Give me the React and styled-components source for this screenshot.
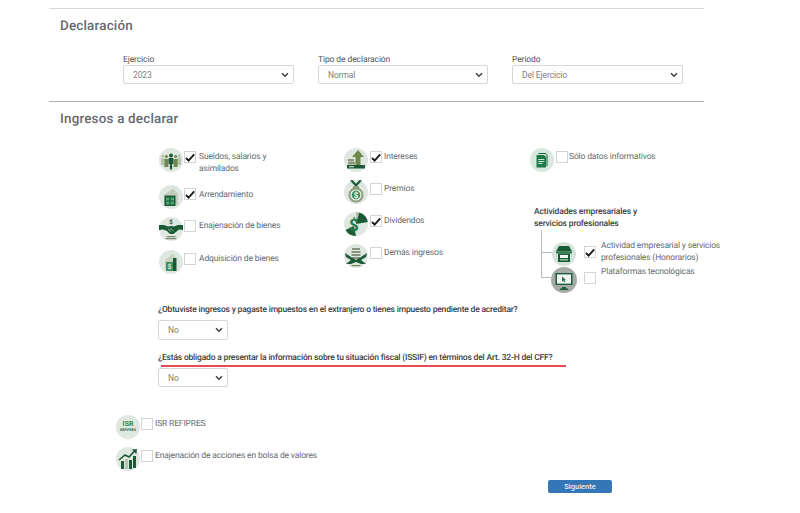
import React from "react";
import styled, { createGlobalStyle } from "styled-components";

const GlobalStyle = createGlobalStyle`
  html, body {
    margin: 0;
    padding: 0;
    background: #fff;
    font-family: Roboto, "Liberation Sans", sans-serif;
    text-rendering: geometricPrecision;
  }
`;

const DARK = "#1b5a36";
const MID = "#3f8f5c";
const OLIVE = "#6d8a4c";
const PALE = "#b9c2ae";
const DISC = "#dfe7e1";

const Page = styled.div`
  width: 655px;
  height: 505px;
  margin-left: 49px;
  padding-top: 8px;
  position: relative;
`;

const Rule = styled.hr`
  margin: 0;
  border: 0;
  height: 1px;
  background: ${(p) => p.$color};
`;

const Heading = styled.h2`
  margin: 0;
  padding: ${(p) => p.$pad};
  font-size: 13.4px;
  line-height: 18px;
  font-weight: 500;
  letter-spacing: 0.2px;
  color: #636a70;
`;

const SelectRow = styled.div`
  display: flex;
  gap: 24px;
  padding: 19px 0 17px 74px;
`;

const Field = styled.div`
  display: flex;
  flex-direction: column;
  width: ${(p) => p.$w}px;
`;

const FieldLabel = styled.label`
  font-size: 8.5px;
  line-height: 10px;
  letter-spacing: -0.1px;
  color: #555;
`;

const SelectBox = styled.div`
  position: relative;
  width: ${(p) => p.$w || "100%"};
  height: ${(p) => p.$h || 19}px;
`;

const NativeSelect = styled.select`
  appearance: none;
  width: 100%;
  height: 100%;
  display: block;
  box-sizing: border-box;
  padding: 0 0 0 9px;
  border: 1px solid #d5d8da;
  border-radius: 2px;
  background: #fff;
  font-family: inherit;
  font-size: 8.5px;
  letter-spacing: -0.1px;
  color: #7b7f82;
`;

const Chevron = styled.svg`
  position: absolute;
  right: 5px;
  top: 50%;
  width: 8px;
  height: 6px;
  margin-top: -3px;
  pointer-events: none;
`;

const Income = styled.div`
  display: grid;
  grid-template-columns: 185px 186px 180px;
  padding: 19px 0 0 110px;
  height: 146px;
`;

const Column = styled.div`
  display: flex;
  flex-direction: column;
`;

const Option = styled.div`
  display: flex;
  align-items: flex-start;
  margin-top: ${(p) => p.$mt || 0}px;
  margin-left: ${(p) => p.$ml || 0}px;
`;

const Disc = styled.svg`
  flex: none;
  width: ${(p) => p.$size || 24}px;
  height: ${(p) => p.$size || 24}px;
  display: block;
`;

const Box = styled.span`
  flex: none;
  box-sizing: border-box;
  width: 12px;
  height: 12px;
  margin: ${(p) => p.$mt ?? 3}px ${(p) => p.$mr ?? 3}px 0 ${(p) => p.$ml ?? 1}px;
  border: 1px solid #d2d4d6;
  background: #fff;
  display: flex;
  align-items: center;
  justify-content: center;
`;

const OptionText = styled.span`
  flex: none;
  font-size: 8.5px;
  line-height: 12px;
  letter-spacing: -0.15px;
  color: #666b6f;
  margin-top: ${(p) => p.$mt ?? 3}px;
  width: ${(p) => p.$w || "auto"};
  white-space: ${(p) => (p.$wrap ? "normal" : "nowrap")};
`;

const GroupTitle = styled.div`
  margin: 34px 0 0 4px;
  width: 130px;
  font-size: 8.5px;
  line-height: 12px;
  font-weight: 500;
  letter-spacing: -0.15px;
  color: #3a3d40;
`;

const Tree = styled.div`
  position: relative;
  margin: 12px 0 0 22px;
  height: 50px;
`;

const TreeLine = styled.span`
  position: absolute;
  left: -11px;
  top: -12px;
  width: 11px;
  height: 47px;
  border-left: 1px solid #b8bcbc;
  border-bottom: 1px solid #b8bcbc;
`;

const TreeBranch = styled.span`
  position: absolute;
  left: -11px;
  top: 10px;
  width: 11px;
  height: 1px;
  background: #b8bcbc;
`;

const Questions = styled.div`
  padding: 10px 0 0 109px;
`;

const Question = styled.p`
  position: relative;
  margin: ${(p) => p.$mt || 0}px 0 4px;
  font-size: 8.5px;
  line-height: 12px;
  font-weight: 500;
  letter-spacing: -0.19px;
  color: #3b3e41;
`;

const RedLine = styled.span`
  position: absolute;
  left: 3px;
  top: 13px;
  width: 405px;
  height: 2px;
  background: #e64a54;
`;

const Extras = styled.div`
  padding: 28px 0 0 67px;
  display: flex;
  flex-direction: column;
  gap: 8px;
`;

const IsrDisc = styled.div`
  flex: none;
  width: 24px;
  height: 24px;
  border-radius: 50%;
  background: ${DISC};
  display: flex;
  flex-direction: column;
  align-items: center;
  justify-content: center;
  color: #2c8a4e;
  font-weight: 700;
`;

const IsrTop = styled.span`
  font-size: 7px;
  line-height: 7px;
`;

const IsrBottom = styled.span`
  font-size: 3.5px;
  line-height: 5px;
  color: ${DARK};
`;

const Footer = styled.div`
  display: flex;
  padding: 9px 0 0 499px;
`;

const NextButton = styled.button`
  width: 64px;
  height: 13px;
  padding: 0;
  border: 0;
  border-radius: 2px;
  background: #3577b6;
  color: #e8f0f8;
  font-family: inherit;
  font-size: 7.5px;
  font-weight: 500;
  line-height: 13px;
`;

const Check = () => (
  <svg width="10" height="9" viewBox="0 0 10 9">
    <path d="M1 5 L3.6 7.6 L9.2 1.4" fill="none" stroke="#1c1c1c" strokeWidth="1.9" />
  </svg>
);

const CheckBox = ({ on, ml, mr, mt }) => (
  <Box $ml={ml} $mr={mr} $mt={mt}>{on && <Check />}</Box>
);

const Select = ({ value, w, h }) => (
  <SelectBox $w={w} $h={h}>
    <NativeSelect defaultValue={value}>
      <option>{value}</option>
    </NativeSelect>
    <Chevron viewBox="0 0 8 6">
      <path d="M1 1.2 L4 4.2 L7 1.2" fill="none" stroke="#3b3f43" strokeWidth="1.5" />
    </Chevron>
  </SelectBox>
);

const DollarText = ({ x, y, size, color }) => (
  <text x={x} y={y} fontSize={size} fontWeight="700" fontFamily="Roboto, sans-serif" textAnchor="middle" fill={color}>$</text>
);

const PeopleIcon = () => (
  <Disc viewBox="0 0 24 24">
    <circle cx="12" cy="12" r="12" fill={DISC} />
    <g fill={PALE}><circle cx="3.8" cy="8" r="1.4" /><path d="M2 10h3.6v7H2z" /><circle cx="20.2" cy="8" r="1.4" /><path d="M18.4 10H22v7h-3.6z" /></g>
    <g fill={OLIVE}><circle cx="7.4" cy="8.5" r="1.6" /><path d="M5.4 11h4v8h-4z" /><circle cx="16.6" cy="8.5" r="1.6" /><path d="M14.6 11h4v8h-4z" /></g>
    <g fill={DARK}><circle cx="12" cy="7.5" r="2" /><path d="M9.6 10h4.8v6h-1.3v5.5h-2.2V16H9.6z" /></g>
  </Disc>
);

const BuildingIcon = () => (
  <Disc viewBox="0 0 24 24">
    <circle cx="12" cy="12" r="12" fill={DISC} />
    <path d="M5 10 L14 3.5 L19 9 V20 H5z" fill="#c3ccbf" />
    <path d="M5.5 10.5h11V21h-11z" fill={DARK} />
    <path d="M7 12.5h3.4v3H7zM11.6 12.5H15v3h-3.4zM7 16.6h3.4v3H7zM11.6 16.6H15v3h-3.4z" fill="#4fa36e" />
  </Disc>
);

const HandshakeIcon = () => (
  <Disc viewBox="0 0 24 24">
    <circle cx="12" cy="12" r="12" fill={DISC} />
    <DollarText x="12" y="6.5" size="6" color={DARK} />
    <path d="M-1 8 L5 8 L9 9.5 L12 9 L15 9.5 L19 8 L25 8 L24.5 13 L20 12.5 L14.5 17 L11 17 L8 14 L4 12.5 L-0.5 13z" fill={DARK} />
    <path d="M9 12 L12 14.5 M11 11.5 L14.5 14" stroke="#dfe7e1" strokeWidth=".6" />
    <path d="M7.5 19h9v1.2h-9zM6.5 21h11v1.2h-11z" fill="#7d8a72" />
  </Disc>
);

const BagIcon = () => (
  <Disc viewBox="0 0 24 24">
    <circle cx="12" cy="12" r="12" fill={DISC} />
    <path d="M6 10 L14 3.5 L17 8 V20 H6z" fill="#c9d2c4" />
    <path d="M7 12h7v9H7z" fill={MID} />
    <DollarText x="10.5" y="19" size="7" color="#d9efe0" />
    <path d="M14 8 L17.5 8 V21 H14z" fill={DARK} />
  </Disc>
);

const GrowthIcon = () => (
  <Disc viewBox="0 0 24 24">
    <circle cx="12" cy="12" r="12" fill={DISC} />
    <path d="M14 2 L20 9 H16.5 V18 H11.5 V9 H8z" fill={OLIVE} />
    <path d="M4 11h6v2.5H4zM4 14h7v2.5H4z" fill="#8a9a7a" />
    <path d="M3 17h18v3.5H3z" fill={DARK} />
    <path d="M5 18h5v1.4H5z" fill={PALE} />
  </Disc>
);

const MedalIcon = () => (
  <Disc viewBox="0 0 24 24">
    <circle cx="12" cy="12" r="12" fill={DISC} />
    <path d="M6 0.5 L12 7 L18 0.5 L15.5 0 L12 3.8 L8.5 0z" fill={DARK} />
    <path d="M9.5 6h5l1 2h-7z" fill="#8a9a7a" />
    <circle cx="12" cy="15" r="7.5" fill="#8a9a7a" />
    <circle cx="12" cy="15" r="5.6" fill="#f3f7f4" />
    <circle cx="12" cy="15" r="4.4" fill={MID} />
    <DollarText x="12" y="18" size="8" color="#fff" />
  </Disc>
);

const PieIcon = () => (
  <Disc viewBox="0 0 24 24">
    <circle cx="12" cy="12" r="12" fill={DISC} />
    <path d="M12 12 V0 A12 12 0 0 1 14.5 0.3z" fill={PALE} />
    <path d="M12 12 L15 0.4 A12 12 0 0 1 23.8 10z" fill={DARK} />
    <path d="M10 14 L12 24 A12 12 0 0 1 1.5 18z" fill={DARK} />
    <DollarText x="10" y="19" size="17" color="#1f7a45" />
  </Disc>
);

const CoinsIcon = () => (
  <Disc viewBox="0 0 24 24">
    <circle cx="12" cy="12" r="12" fill={DISC} />
    <path d="M8 4h8v2H8zM7.5 7h9v2h-9zM7.5 10h9v2h-9zM8 13h8v2H8z" fill="#86917e" />
    <path d="M1 9 L7 13 L12 16 L17 13 L23 9 L22 13 L17 16 L22 20 H17 L12 18 L7 20 H2 L7 16 L2 13z" fill={DARK} />
    <path d="M7.5 21h9v1.2h-9z" fill={OLIVE} />
  </Disc>
);

const DocIcon = () => (
  <Disc viewBox="0 0 24 24">
    <circle cx="12" cy="12" r="12" fill="#d8e8de" />
    <path d="M8.5 5h7l2 2v11h-1V6.4L14.8 6H8.5z" fill={DARK} />
    <path d="M6.5 7h7.5l2 2v10.5h-9.5z" fill="#1c7a49" />
    <path d="M8.3 11h6v1H8.3zM8.3 13h6v1H8.3zM8.3 15h4v1H8.3z" fill="#c8e6d3" />
  </Disc>
);

const StoreIcon = () => (
  <Disc viewBox="0 0 24 24">
    <circle cx="12" cy="12" r="12" fill="#d6e3da" />
    <path d="M7 4h10l3 5.5H4z" fill={DARK} />
    <path d="M4 9.5h16v2H4z" fill="#2c7a4d" />
    <path d="M6 11.5h12V20H6z" fill={DARK} />
    <path d="M8 13h8v3H8z" fill="#f3f7f4" />
    <path d="M8 17h8v1.5H8z" fill="#8fc39f" />
  </Disc>
);

const MonitorIcon = () => (
  <Disc viewBox="0 0 26 26" $size={26}>
    <circle cx="13" cy="13" r="13" fill="#a6aaa7" />
    <path d="M4.5 6h17v12h-17z" fill="#1c5f3a" />
    <path d="M6 7.4h14v9.2H6z" fill="#f2f5f3" />
    <path d="M11 20h4v1.4h2V23H9v-1.6h2z" fill="#1c5f3a" />
    <path d="M11 9.5 L15 13 L13.3 13.2 L14.2 15 L13.2 15.4 L12.4 13.7 L11 14.6z" fill="#2b6e49" />
  </Disc>
);

const ChartIcon = () => (
  <Disc viewBox="0 0 24 24">
    <circle cx="12" cy="12" r="12" fill={DISC} />
    <path d="M3 13 L9 8 L13 10 L19 3.5" fill="none" stroke={DARK} strokeWidth="1.6" />
    <path d="M16 2.5 L21 2 L20.4 7z" fill={DARK} />
    <path d="M5 14h3v8H5zM13 13h3v9h-3z" fill={DARK} />
    <path d="M9 12h3v10H9z" fill={PALE} />
    <path d="M17 9h3v12h-3z" fill={DARK} />
  </Disc>
);

export default function App() {
  return (
    <Page>
      <GlobalStyle />
      <Rule $color="#d6d9d9" />
      <Heading $pad="9px 0 0 11px">Declaración</Heading>
      <SelectRow>
        <Field $w={171}>
          <FieldLabel>Ejercicio</FieldLabel>
          <Select value="2023" />
        </Field>
        <Field $w={170}>
          <FieldLabel>Tipo de declaración</FieldLabel>
          <Select value="Normal" />
        </Field>
        <Field $w={171}>
          <FieldLabel>Periodo</FieldLabel>
          <Select value="Del Ejercicio" />
        </Field>
      </SelectRow>
      <Rule $color="#adb3b3" />
      <Heading $pad="9px 0 0 11px">Ingresos a declarar</Heading>
      <Income>
        <Column>
          <Option>
            <PeopleIcon /><CheckBox on />
            <OptionText $wrap $w="88px">Sueldos, salarios y asimilados</OptionText>
          </Option>
          <Option $mt={10}>
            <BuildingIcon /><CheckBox on />
            <OptionText $mt={4}>Arrendamiento</OptionText>
          </Option>
          <Option $mt={8}>
            <HandshakeIcon /><CheckBox />
            <OptionText>Enajenación de bienes</OptionText>
          </Option>
          <Option $mt={9}>
            <BagIcon /><CheckBox />
            <OptionText>Adquisición de bienes</OptionText>
          </Option>
        </Column>
        <Column>
          <Option>
            <GrowthIcon /><CheckBox on ml={2} mr={2} />
            <OptionText>Intereses</OptionText>
          </Option>
          <Option $mt={8}>
            <MedalIcon /><CheckBox ml={2} mr={2} />
            <OptionText>Premios</OptionText>
          </Option>
          <Option $mt={8}>
            <PieIcon /><CheckBox on ml={2} mr={2} />
            <OptionText>Dividendos</OptionText>
          </Option>
          <Option $mt={8}>
            <CoinsIcon /><CheckBox ml={2} mr={2} />
            <OptionText>Demás ingresos</OptionText>
          </Option>
        </Column>
        <Column>
          <Option>
            <DocIcon /><CheckBox ml={2} mr={1} />
            <OptionText>Sólo datos informativos</OptionText>
          </Option>
          <GroupTitle>Actividades empresariales y servicios profesionales</GroupTitle>
          <Tree>
            <TreeLine />
            <TreeBranch />
            <Option>
              <StoreIcon /><CheckBox on ml={8} mr={5} mt={4} />
              <OptionText $wrap $w="125px" $mt={-2}>Actividad empresarial y servicios profesionales (Honorarios)</OptionText>
            </Option>
            <Option $mt={1} $ml={-1}>
              <MonitorIcon /><CheckBox ml={7} mr={5} mt={5} />
              <OptionText $mt={-1}>Plataformas tecnológicas</OptionText>
            </Option>
          </Tree>
        </Column>
      </Income>
      <Questions>
        <Question>¿Obtuviste ingresos y pagaste impuestos en el extranjero o tienes impuesto pendiente de acreditar?</Question>
        <Select value="No" w="70px" h={20} />
        <Question $mt={12}>
          ¿Estás obligado a presentar la información sobre tu situación fiscal (ISSIF) en términos del Art. 32-H del CFF?
          <RedLine />
        </Question>
        <Select value="No" w="70px" />
      </Questions>
      <Extras>
        <Option>
          <IsrDisc>
            <IsrTop>ISR</IsrTop>
            <IsrBottom>REFIPRES</IsrBottom>
          </IsrDisc>
          <CheckBox mr={2} />
          <OptionText>ISR REFIPRES</OptionText>
        </Option>
        <Option>
          <ChartIcon /><CheckBox mr={2} />
          <OptionText>Enajenación de acciones en bolsa de valores</OptionText>
        </Option>
      </Extras>
      <Footer>
        <NextButton>Siguiente</NextButton>
      </Footer>
    </Page>
  );
}
